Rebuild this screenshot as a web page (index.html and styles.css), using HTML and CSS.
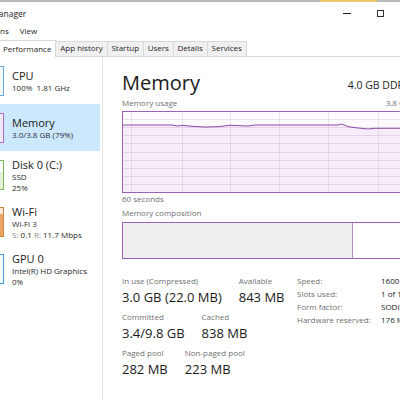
FILE: index.html
```html
<!DOCTYPE html>
<html>
<head>
<meta charset="utf-8">
<link rel="stylesheet" href="styles.css">
</head>
<body>
<div class="topline"></div>
<div class="titlebar">
  <span class="title">Task Manager</span>
  <div class="controls"><span class="min"></span><span class="max"></span></div>
</div>
<div class="menubar">
  <span class="menu">File</span><span class="menu">Options</span><span class="menu">View</span>
</div>
<div class="tabs">
  <span class="tab active">Performance</span>
  <span class="tab">App history</span>
  <span class="tab">Startup</span>
  <span class="tab">Users</span>
  <span class="tab">Details</span>
  <span class="tab">Services</span>
</div>
<div class="content">
  <div class="sidebar">
    <div class="item">
      <div class="ibox cpu"></div>
      <div class="itext"><div class="name">CPU</div><div class="sub">100%&nbsp; 1.81 GHz</div></div>
    </div>
    <div class="item selected">
      <div class="ibox mem"></div>
      <div class="itext"><div class="name">Memory</div><div class="sub">3.0/3.8 GB (79%)</div></div>
    </div>
    <div class="item">
      <div class="ibox disk"></div>
      <div class="itext"><div class="name">Disk 0 (C:)</div><div class="sub">SSD</div><div class="sub">25%</div></div>
    </div>
    <div class="item">
      <div class="ibox wifi"></div>
      <div class="itext"><div class="name">Wi-Fi</div><div class="sub">Wi-Fi 3</div><div class="sub"><span class="dim">S:</span> 0.1 <span class="dim">R:</span> 11.7 Mbps</div></div>
    </div>
    <div class="item">
      <div class="ibox gpu"></div>
      <div class="itext"><div class="name">GPU 0</div><div class="sub">Intel(R) HD Graphics</div><div class="sub">0%</div></div>
    </div>
  </div>
  <div class="main">
    <div class="head">
      <span class="big">Memory</span>
      <span class="ddr">4.0 GB DDR3</span>
    </div>
    <div class="caprow"><span>Memory usage</span><span>3.8 GB</span></div>
    <svg class="graph" width="288" height="82" viewBox="0 0 288 82">
      <rect x="0.5" y="0.5" width="287" height="81" fill="#fdfbfd"/>
      <g stroke="#ecdff0" stroke-width="1">
        <line x1="0" y1="8.5" x2="288" y2="8.5"/>
        <line x1="0" y1="16.5" x2="288" y2="16.5"/>
        <line x1="0" y1="24.5" x2="288" y2="24.5"/>
        <line x1="0" y1="32.5" x2="288" y2="32.5"/>
        <line x1="0" y1="41.5" x2="288" y2="41.5"/>
        <line x1="0" y1="49.5" x2="288" y2="49.5"/>
        <line x1="0" y1="57.5" x2="288" y2="57.5"/>
        <line x1="0" y1="65.5" x2="288" y2="65.5"/>
        <line x1="0" y1="73.5" x2="288" y2="73.5"/>
        <line x1="9.5" y1="0" x2="9.5" y2="82"/>
        <line x1="60.5" y1="0" x2="60.5" y2="82"/>
        <line x1="108.5" y1="0" x2="108.5" y2="82"/>
        <line x1="157.5" y1="0" x2="157.5" y2="82"/>
        <line x1="206.5" y1="0" x2="206.5" y2="82"/>
        <line x1="256.5" y1="0" x2="256.5" y2="82"/>
      </g>
      <polygon fill="rgba(139,18,174,0.06)" points="0,14 50,14 55,15 60,14.3 70,15.3 83,16 96,15.7 108,14.3 126,15 133,14 216,14 220,13 226,15.7 236,17 246,18 253,17.3 288,17.3 288,81 0,81"/>
      <polyline fill="none" stroke="#8e4aa6" stroke-width="1" points="0,14 50,14 55,15 60,14.3 70,15.3 83,16 96,15.7 108,14.3 126,15 133,14 216,14 220,13 226,15.7 236,17 246,18 253,17.3 288,17.3"/>
      <rect x="0.5" y="0.5" width="287" height="81" fill="none" stroke="#9b62b1"/>
    </svg>
    <div class="caption">60 seconds</div>
    <div class="caption comp-label">Memory composition</div>
    <div class="comp"><div class="inuse"></div></div>
    <div class="stats">
      <div class="left">
        <div class="srow">
          <div class="stat"><div class="lab">In use (Compressed)</div><div class="val">3.0 GB (22.0 MB)</div></div>
          <div class="stat"><div class="lab">Available</div><div class="val">843 MB</div></div>
        </div>
        <div class="srow">
          <div class="stat"><div class="lab">Committed</div><div class="val">3.4/9.8 GB</div></div>
          <div class="stat"><div class="lab">Cached</div><div class="val">838 MB</div></div>
        </div>
        <div class="srow">
          <div class="stat"><div class="lab">Paged pool</div><div class="val">282 MB</div></div>
          <div class="stat"><div class="lab">Non-paged pool</div><div class="val">223 MB</div></div>
        </div>
      </div>
      <div class="spec">
        <span class="k">Speed:</span><span class="v">1600 MHz</span>
        <span class="k">Slots used:</span><span class="v">1 of 1</span>
        <span class="k">Form factor:</span><span class="v">SODIMM</span>
        <span class="k">Hardware reserved:</span><span class="v">176 MB</span>
      </div>
    </div>
  </div>
</div>
</body>
</html>
```
FILE: styles.css
```css
html, body {
  margin: 0;
  padding: 0;
}
body {
  width: 400px;
  height: 400px;
  overflow: hidden;
  background: #fff;
  font-family: "Open Sans", "Noto Sans", sans-serif;
  color: #1e1e1e;
}
.topline {
  height: 2px;
  background: linear-gradient(90deg, #b9b9b9 0 320px, #efc46e 320px 377px, #b9b9b9 377px);
}
.titlebar {
  height: 22px;
  display: flex;
  align-items: center;
  justify-content: space-between;
}
.title {
  font-size: 8.5px;
  white-space: nowrap;
  margin-left: -29px;
}
.controls {
  display: flex;
  align-items: center;
  margin-right: 16px;
}
.min {
  width: 8px;
  height: 1px;
  background: #222;
  margin-right: 26px;
}
.max {
  width: 7px;
  height: 7px;
  border: 1px solid #333;
  box-sizing: border-box;
}
.menubar {
  height: 14px;
  display: flex;
  font-size: 8px;
  line-height: 14px;
  margin-left: -50px;
  white-space: nowrap;
}
.menu {
  padding: 0 5.5px;
}
.tabs {
  margin-top: 2px;
  height: 16px;
  display: flex;
  align-items: flex-end;
  border-bottom: 1px solid #d9d9d9;
  font-size: 8px;
  white-space: nowrap;
}
.tab {
  height: 15px;
  box-sizing: border-box;
  padding: 0 3.8px;
  line-height: 12px;
  background: #f0f0f0;
  border: 1px solid #d9d9d9;
  border-bottom: none;
  margin-right: -1px;
  color: #1e1e1e;
}
.tab.active {
  height: 17px;
  margin-bottom: -1px;
  background: #fff;
  margin-left: -1px;
  padding: 2px 4px 0 3px;
  position: relative;
  z-index: 1;
}
.content {
  display: flex;
  height: 343px;
}
.sidebar {
  flex: none;
  border-right: 1px solid #e3e3e3;
  padding-right: 2px;
  box-sizing: border-box;
  width: 103px;
}
.item {
  height: 47px;
  display: flex;
  align-items: center;
}
.item.selected {
  background: #cce8ff;
}
.ibox {
  width: 40px;
  height: 30px;
  margin-left: -36px;
  margin-right: 8px;
  box-sizing: border-box;
  border: 1px solid #6aa9dc;
  flex: none;
}
.ibox.cpu { border-color: #6aa9dc; background: #f5fafe; }
.ibox.mem { border-color: #a870c0; background: #f1e6f5; }
.ibox.disk { border-color: #7cb65a; background: linear-gradient(#fff 40%, #e3f1da 40%); }
.ibox.wifi { border-color: #c98540; background: linear-gradient(#fbe9d8 20%, #eba562 20%); }
.ibox.gpu { border-color: #4d98d4; background: #f4f9fd; }
.itext {
  white-space: nowrap;
  margin-top: 2px;
}
.name {
  font-size: 11px;
  line-height: 13px;
  color: #1a1a1a;
}
.sub {
  font-size: 8px;
  line-height: 11.5px;
  color: #2a2a2a;
}
.dim {
  color: #8a8a8a;
}
.main {
  padding: 14px 0 0 19px;
  width: 288px;
  flex: none;
}
.head {
  height: 24px;
  display: flex;
  justify-content: space-between;
  align-items: flex-end;
}
.big {
  font-size: 20px;
  line-height: 24px;
  color: #1a1a1a;
}
.ddr {
  font-size: 10.5px;
  line-height: 13px;
  margin-bottom: 3px;
  white-space: nowrap;
}
.caprow {
  display: flex;
  justify-content: space-between;
  font-size: 8px;
  line-height: 11px;
  color: #707070;
  margin-top: 2px;
}
.graph {
  display: block;
  margin-top: 3px;
}
.caption {
  font-size: 8px;
  line-height: 11px;
  color: #707070;
}
.comp-label {
  margin-top: 3px;
}
.comp {
  margin-top: 4px;
  height: 37px;
  border: 1px solid #9b62b1;
  box-sizing: border-box;
  display: flex;
}
.inuse {
  width: 229px;
  background: #f0eef1;
  border-right: 1px solid #b38fc2;
}
.stats {
  display: flex;
  align-items: flex-start;
  margin-top: 16px;
}
.left {
  width: 175px;
  flex: none;
  display: flex;
  flex-direction: column;
  gap: 5px;
}
.srow {
  display: flex;
  gap: 17px;
}
.lab {
  font-size: 8px;
  line-height: 11px;
  color: #707070;
  white-space: nowrap;
}
.val {
  font-size: 13px;
  line-height: 18px;
  margin-top: 2px;
  white-space: nowrap;
  color: #1a1a1a;
}
.spec {
  display: grid;
  grid-template-columns: 84px auto;
  grid-auto-rows: 13px;
  align-content: start;
  font-size: 8px;
  line-height: 13px;
  margin-top: -1px;
  white-space: nowrap;
}
.spec .k { color: #707070; }
.spec .v { color: #1a1a1a; }
```
